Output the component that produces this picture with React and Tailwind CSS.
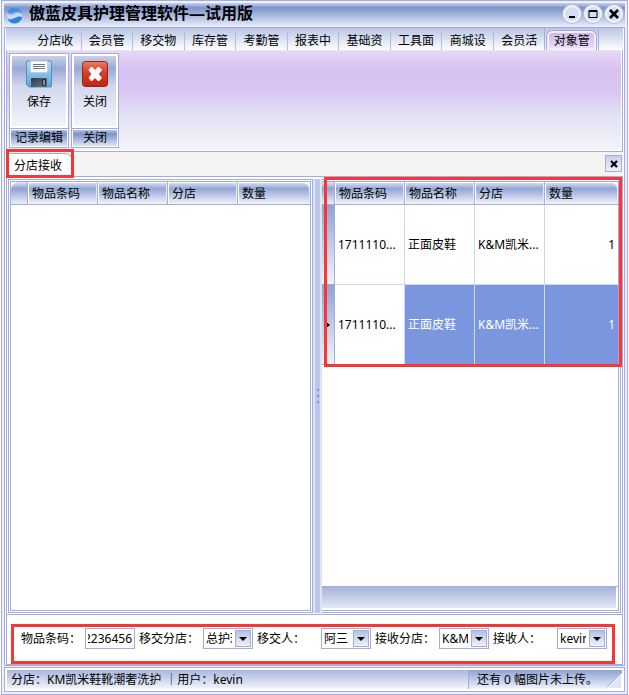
import React, { useState, useEffect, useRef } from "react";

const menuItems = ["分店收", "会员管", "移交物", "库存管", "考勤管", "报表中", "基础资", "工具面", "商城设", "会员活", "对象管"];
const columns = ["物品条码", "物品名称", "分店", "数量"];
const receiveRows = [
    { code: "1711110...", name: "正面皮鞋", store: "K&M凯米...", qty: 1 },
    { code: "1711110...", name: "正面皮鞋", store: "K&M凯米...", qty: 1 }
];

const LogoIcon = () => (
    <svg width="17" height="17" viewBox="0 0 17 17" aria-hidden="true">
        <path d="M1.500 4.500 C3 2 5.500 0.500 8.500 0.500 C12 0.500 15 2.500 16 6 C13.500 4 10.500 4 8 5.500 C5.500 7 3 6.500 1.500 4.500Z" fill="#3d92e0" />
        <path d="M0.500 6.500 C3 8.500 6 8.500 8.500 7 C11.500 5.300 14.500 5.800 16.500 8.500 C16.300 10 15.800 11.200 15 12.200 C13 9.800 10.500 9.800 8 11 C5.200 12.300 2.500 12 0.700 10 C0.400 9 0.300 7.800 0.500 6.500Z" fill="#c3dcf5" />
        <path d="M1.500 11.800 C4 13 6.500 12.500 9 11 C11.500 9.300 14 9 16.300 10 C15.300 14 12.200 16.500 8.500 16.500 C5.300 16.500 2.800 14.700 1.500 11.800Z" fill="#2784de" />
    </svg>
);

const SaveIcon = () => (
    <svg width="26" height="28" viewBox="0 0 26 28" aria-hidden="true">
        <defs>
            <linearGradient id="disk" x1="0" y1="0" x2="0" y2="1">
                <stop offset="0" stopColor="#b4dcf2" />
                <stop offset="1" stopColor="#5ea3d9" />
            </linearGradient>
            <linearGradient id="shutter" x1="0" y1="0" x2="1" y2="1">
                <stop offset="0" stopColor="#2e3a48" />
                <stop offset="1" stopColor="#66788a" />
            </linearGradient>
        </defs>
        <path d="M1.500 1 H24.500 Q25.500 1 25.500 2 V26 Q25.500 27 24.500 27 H3 L0.500 24.500 V2 Q0.500 1 1.500 1Z" fill="url(#disk)" stroke="#5590c2" />
        <path d="M4.500 1 H21.500 V11 Q21.500 12.500 20 12.500 H6 Q4.500 12.500 4.500 11Z" fill="#fff" stroke="#b6d3e6" />
        <path d="M7 4.500 H19 M7 6.500 H19 M7 8.500 H19" stroke="#70757e" />
        <path d="M5 27 V19 Q5 18 6 18 H20 Q21 18 21 19 V27Z" fill="url(#shutter)" />
        <path d="M16.500 19.500 H19.500 V25.500 H16.500Z" fill="#7d93a8" stroke="#27323e" />
    </svg>
);

const CloseIcon = () => (
    <svg width="28" height="28" viewBox="0 0 28 28" aria-hidden="true">
        <defs>
            <linearGradient id="red" x1="0" y1="0" x2="0" y2="1">
                <stop offset="0" stopColor="#ea7a64" />
                <stop offset="0.450" stopColor="#d4402c" />
                <stop offset="1" stopColor="#be2414" />
            </linearGradient>
        </defs>
        <rect x="1.500" y="1.500" width="25" height="25" rx="3" fill="url(#red)" stroke="#9c2216" />
        <path d="M8 10 L10.500 7 L14 10.500 L17.500 7 L20.500 10 L17.300 14 L20.500 18 L17.500 21 L14 17.500 L10.500 21 L8 18 L11 14Z" fill="#fff" stroke="#fff" strokeLinejoin="round" />
    </svg>
);

const WindowButton = ({ label, children }) => (
    <button
        type="button"
        aria-label={label}
        className="flex h-[18px] w-[18px] items-center justify-center rounded-full border-2 border-[#f2f4fc] bg-[#d5ddf1] shadow-[0_0_0_1px_#b3c0e2]"
    >
        <svg width="12" height="12" viewBox="0 0 12 12" className="shrink-0" fill="none" stroke="#000">
            {children}
        </svg>
    </button>
);

const RibbonGroup = ({ icon, text, caption, className }) => (
    <div className={`flex flex-col border border-[#a3acdb] bg-white p-px ${className}`}>
        <button
            type="button"
            className="flex flex-1 flex-col items-center gap-1 border border-white bg-[linear-gradient(#c9d1e8,#9aaad6_18%,#d3daee_45%,#f2f4fb)] pt-1"
        >
            {icon}
            <span className="leading-5">{text}</span>
        </button>
        <div className="-mx-px mt-px border-t border-[#a3acdb] px-px pt-px">
            <div className="bg-[linear-gradient(#b5c2e1,#7b94ca_25%,#dfe5f4)] text-center leading-4">{caption}</div>
        </div>
    </div>
);

const GridHeader = ({ indicatorClass }) => (
    <thead>
        <tr className="h-[23px]">
            <th className={`border-r border-b border-[#a3acdb] bg-linear-to-b from-[#dfe5f4] via-[#8fa3d2] to-[#eceffa] via-30% ${indicatorClass}`}></th>
            {columns.map((col, i) => (
                <th
                    key={col}
                    className={`border-b border-[#a3acdb] bg-linear-to-b from-[#dfe5f4] via-[#93a6d4] to-[#f2f4fc] via-30% px-1 pt-[2px] pb-0 text-left font-normal shadow-[inset_1px_1px_0_#fff,inset_-1px_0_0_#e4e9f6] ${
                        i < columns.length - 1 ? "w-[70px] border-r" : "rounded-tr-lg"
                    }`}
                >
                    {col}
                </th>
            ))}
        </tr>
    </thead>
);

const SelectField = ({ id, label, value }) => (
    <div className="flex items-center">
        <label htmlFor={id} className="w-16 whitespace-nowrap">{label}：</label>
        <div className="relative">
            <select
                id={id}
                defaultValue={value}
                className="block h-[21px] w-[50px] appearance-none overflow-hidden border border-[#a3acdb] bg-white pr-5 pl-[2px] outline-none"
            >
                <option value={value}>{value}</option>
            </select>
            <span className="pointer-events-none absolute top-[2px] right-[2px] flex h-[17px] w-4 items-center justify-center border border-[#a3acdb] bg-linear-to-b from-[#b4c2e3] to-[#eef1fa]">
                <svg width="8" height="4" viewBox="0 0 8 4">
                    <path d="M0 0 H8 L4 4Z" fill="#000" />
                </svg>
            </span>
        </div>
    </div>
);

const App = () => {
    const [barcode, setBarcode] = useState("2236456");
    const [selectedRow, setSelectedRow] = useState(1);
    const barcodeRef = useRef(null);

    // Keep the end of a long barcode in view
    useEffect(() => {
        barcodeRef.current.scrollLeft = barcodeRef.current.scrollWidth;
    }, [barcode]);

    return (
        <div className="flex min-h-screen flex-col bg-white px-px font-['Noto_Sans','Noto_Sans_CJK_SC',sans-serif] text-[12px] leading-4 text-black">
            <div className="flex flex-1 flex-col border border-[#a3acdb] bg-[#eef1fb] p-[2px]">
                {/* Title bar */}
                <header className="flex h-6 items-center bg-linear-to-b from-[#c9d3ec] via-[#7c94cb] to-[#edf0fa] via-20% px-[2px]">
                    <LogoIcon />
                    <h1 className="ml-[6px] flex-1 pb-1 text-[16px] leading-5 font-bold">傲蓝皮具护理管理软件—试用版</h1>
                    <div className="flex gap-[3px] pb-[2px]">
                        <WindowButton label="最小化"><path d="M3 9 H9" strokeWidth="2" /></WindowButton>
                        <WindowButton label="最大化"><path d="M2 2.500 H10 V9.500 H2Z M2 3.500 H10" /></WindowButton>
                        <WindowButton label="关闭窗口"><path d="M2 2 L10 10 M10 2 L2 10" strokeWidth="2.500" /></WindowButton>
                    </div>
                </header>

                <div className="flex flex-1 flex-col border border-[#a3acdb] bg-white px-px">
                    {/* Menu tabs */}
                    <nav className="flex h-[22px] items-end bg-linear-to-b from-[#b9c5e3] to-white pr-6 pl-6">
                        {menuItems.map((item, i) =>
                            i === menuItems.length - 1 ? (
                                <div key={item} className="flex h-full flex-1 items-end border-x border-[#a3acdb] px-px">
                                    <button
                                        type="button"
                                        className="h-5 flex-1 rounded-t-md border border-b-0 border-[#a3acdb] bg-linear-to-b from-[#c9b4e8] to-[#eee2fa] whitespace-nowrap shadow-[inset_0_0_0_2px_#f3edfc]"
                                    >
                                        {item}
                                    </button>
                                </div>
                            ) : (
                                <button
                                    key={item}
                                    type="button"
                                    className={`h-[18px] flex-1 whitespace-nowrap ${i < menuItems.length - 2 ? "border-r border-[#b3bce0]" : ""}`}
                                >
                                    {item}
                                </button>
                            )
                        )}
                    </nav>

                    {/* Ribbon */}
                    <div className="flex h-[102px] gap-[2px] border border-[#a3acdb] border-t-[#e8e2f6] bg-[linear-gradient(#e6d8f6,#d9c2f3_18%,#d9c5f3_40%,#e2e2f3_65%,#f5f6fc)] px-[2px] pt-[2px] pb-[3px] shadow-[inset_-1px_-1px_0_#fff]">
                        <RibbonGroup className="w-[60px]" icon={<SaveIcon />} text="保存" caption="记录编辑" />
                        <RibbonGroup className="w-12" icon={<CloseIcon />} text="关闭" caption="关闭" />
                    </div>

                    {/* Document tabs */}
                    <div className="flex h-6 items-end justify-between bg-[#f5f4f2] px-px">
                        <div className="relative h-[23px] w-[66px] rounded-tr-lg border border-b-0 border-[#a3acdb] bg-white pt-1 pl-[6px] whitespace-nowrap">
                            分店接收
                            <span className="absolute -inset-x-[2px] -top-[5px] -bottom-[2px] z-10 border-[3px] border-[#f93636]"></span>
                        </div>
                        <button
                            type="button"
                            aria-label="关闭标签"
                            className="mb-1 flex h-[17px] w-[17px] items-center justify-center border border-[#a3acdb] bg-linear-to-b from-[#c5d0e9] to-[#eef1fa]"
                        >
                            <svg width="8" height="8" viewBox="0 0 8 8" stroke="#000" strokeWidth="2.200">
                                <path d="M1 1 L7 7 M7 1 L1 7" />
                            </svg>
                        </button>
                    </div>

                    <main className="flex flex-1 flex-col border-x border-t border-[#a3acdb] pt-[2px]">
                        <div className="flex flex-1 px-px">
                            {/* Pending items */}
                            <section className="flex-1 border border-[#a3acdb] p-px">
                                <div className="h-full border border-[#a3acdb]">
                                    <table className="w-full table-fixed border-separate border-spacing-0">
                                        <GridHeader indicatorClass="w-[17px] rounded-tl-lg" />
                                    </table>
                                </div>
                            </section>

                            <div className="flex w-[9px] cursor-col-resize flex-col items-center justify-center gap-1 border-x-2 border-[#dfe4f4] bg-[#bdc7e8]">
                                <span className="h-[2px] w-[2px] bg-[#8593cb]"></span>
                                <span className="h-[2px] w-[2px] bg-[#8593cb]"></span>
                                <span className="h-[2px] w-[2px] bg-[#8593cb]"></span>
                            </div>

                            {/* Received items */}
                            <section className="relative flex w-[299px] flex-col border-y border-r border-[#a3acdb] py-px pr-px">
                                <div className="flex flex-1 flex-col border-y border-r border-[#a3acdb]">
                                    <table className="w-full table-fixed border-separate border-spacing-0">
                                        <GridHeader indicatorClass="w-[13px]" />
                                        <tbody>
                                            {receiveRows.map((row, i) => {
                                                const cell = selectedRow === i
                                                    ? "border-[#d0d9f3] bg-[#7a96df] text-white"
                                                    : "border-[#ccd7f2]";
                                                return (
                                                    <tr key={i} className="h-20" onClick={() => setSelectedRow(i)}>
                                                        <td className="border-r border-b border-[#a3acdb] bg-linear-to-b from-[#8fa3d2] to-[#f2f4fc] p-0">
                                                            {selectedRow === i && (
                                                                <svg width="4" height="6" viewBox="0 0 4 6" className="ml-1">
                                                                    <path d="M0 0 L4 3 L0 6Z" fill="#000" />
                                                                </svg>
                                                            )}
                                                        </td>
                                                        <td className="border-r border-b border-[#ccd7f2] pl-[3px] whitespace-nowrap">{row.code}</td>
                                                        <td className={`border-r border-b pl-[3px] whitespace-nowrap ${cell}`}>{row.name}</td>
                                                        <td className={`border-r border-b pl-[3px] whitespace-nowrap ${cell}`}>{row.store}</td>
                                                        <td className={`border-b pr-[3px] text-right ${cell}`}>{row.qty}</td>
                                                    </tr>
                                                );
                                            })}
                                        </tbody>
                                    </table>
                                    <div className="mt-auto border-t border-[#a3acdb] pr-[2px] pb-[2px]">
                                        <div className="h-[21px] bg-linear-to-b from-[#a5b4da] to-[#e3e8f5]"></div>
                                    </div>
                                </div>
                                <span className="pointer-events-none absolute -top-[3px] -right-[2px] left-[2px] h-[190px] border-[3px] border-[#f93636]"></span>
                            </section>
                        </div>

                        {/* Filter form */}
                        <form className="relative mt-px flex h-[51px] items-start gap-1 border-y border-[#a3acdb] pt-[13px] pl-[14px]">
                            <div className="flex items-center">
                                <label htmlFor="barcode" className="w-16 whitespace-nowrap">物品条码：</label>
                                <input
                                    id="barcode"
                                    ref={barcodeRef}
                                    value={barcode}
                                    onChange={(e) => setBarcode(e.target.value)}
                                    className="h-[21px] w-[50px] border border-[#a3acdb] bg-white px-[2px] outline-none"
                                />
                            </div>
                            <SelectField id="from-store" label="移交分店" value="总护理" />
                            <SelectField id="from-user" label="移交人" value="阿三" />
                            <SelectField id="to-store" label="接收分店" value="K&M凯米" />
                            <SelectField id="to-user" label="接收人" value="kevin" />
                            <span className="pointer-events-none absolute top-[9px] right-[7px] bottom-0 left-1 border-[3px] border-[#f93636]"></span>
                        </form>
                    </main>
                </div>

                {/* Status bar */}
                <footer className="mt-px flex h-[25px] border border-[#a3acdb] bg-white p-[2px] leading-5">
                    <div className="flex flex-1 bg-linear-to-b from-[#a9b7dc] to-[#f3f5fc] pl-1">
                        <span>分店：KM凯米鞋靴潮奢洗护</span>
                        <span className="ml-1">｜用户：kevin</span>
                    </div>
                    <div className="flex w-[154px] justify-between border-l border-[#a3acdb] bg-linear-to-b from-[#8fa2d1] to-[#f0f3fb] pl-2">
                        <span>还有 0 幅图片未上传。</span>
                        <svg width="16" height="16" viewBox="0 0 16 16" className="self-end">
                            <path d="M1 15.500 L15.500 1 V15.500Z" fill="#dfe5f5" stroke="#fff" />
                            <path d="M1 14 L14 1" stroke="#a3acdb" />
                        </svg>
                    </div>
                </footer>
            </div>
        </div>
    );
};

export default App;
